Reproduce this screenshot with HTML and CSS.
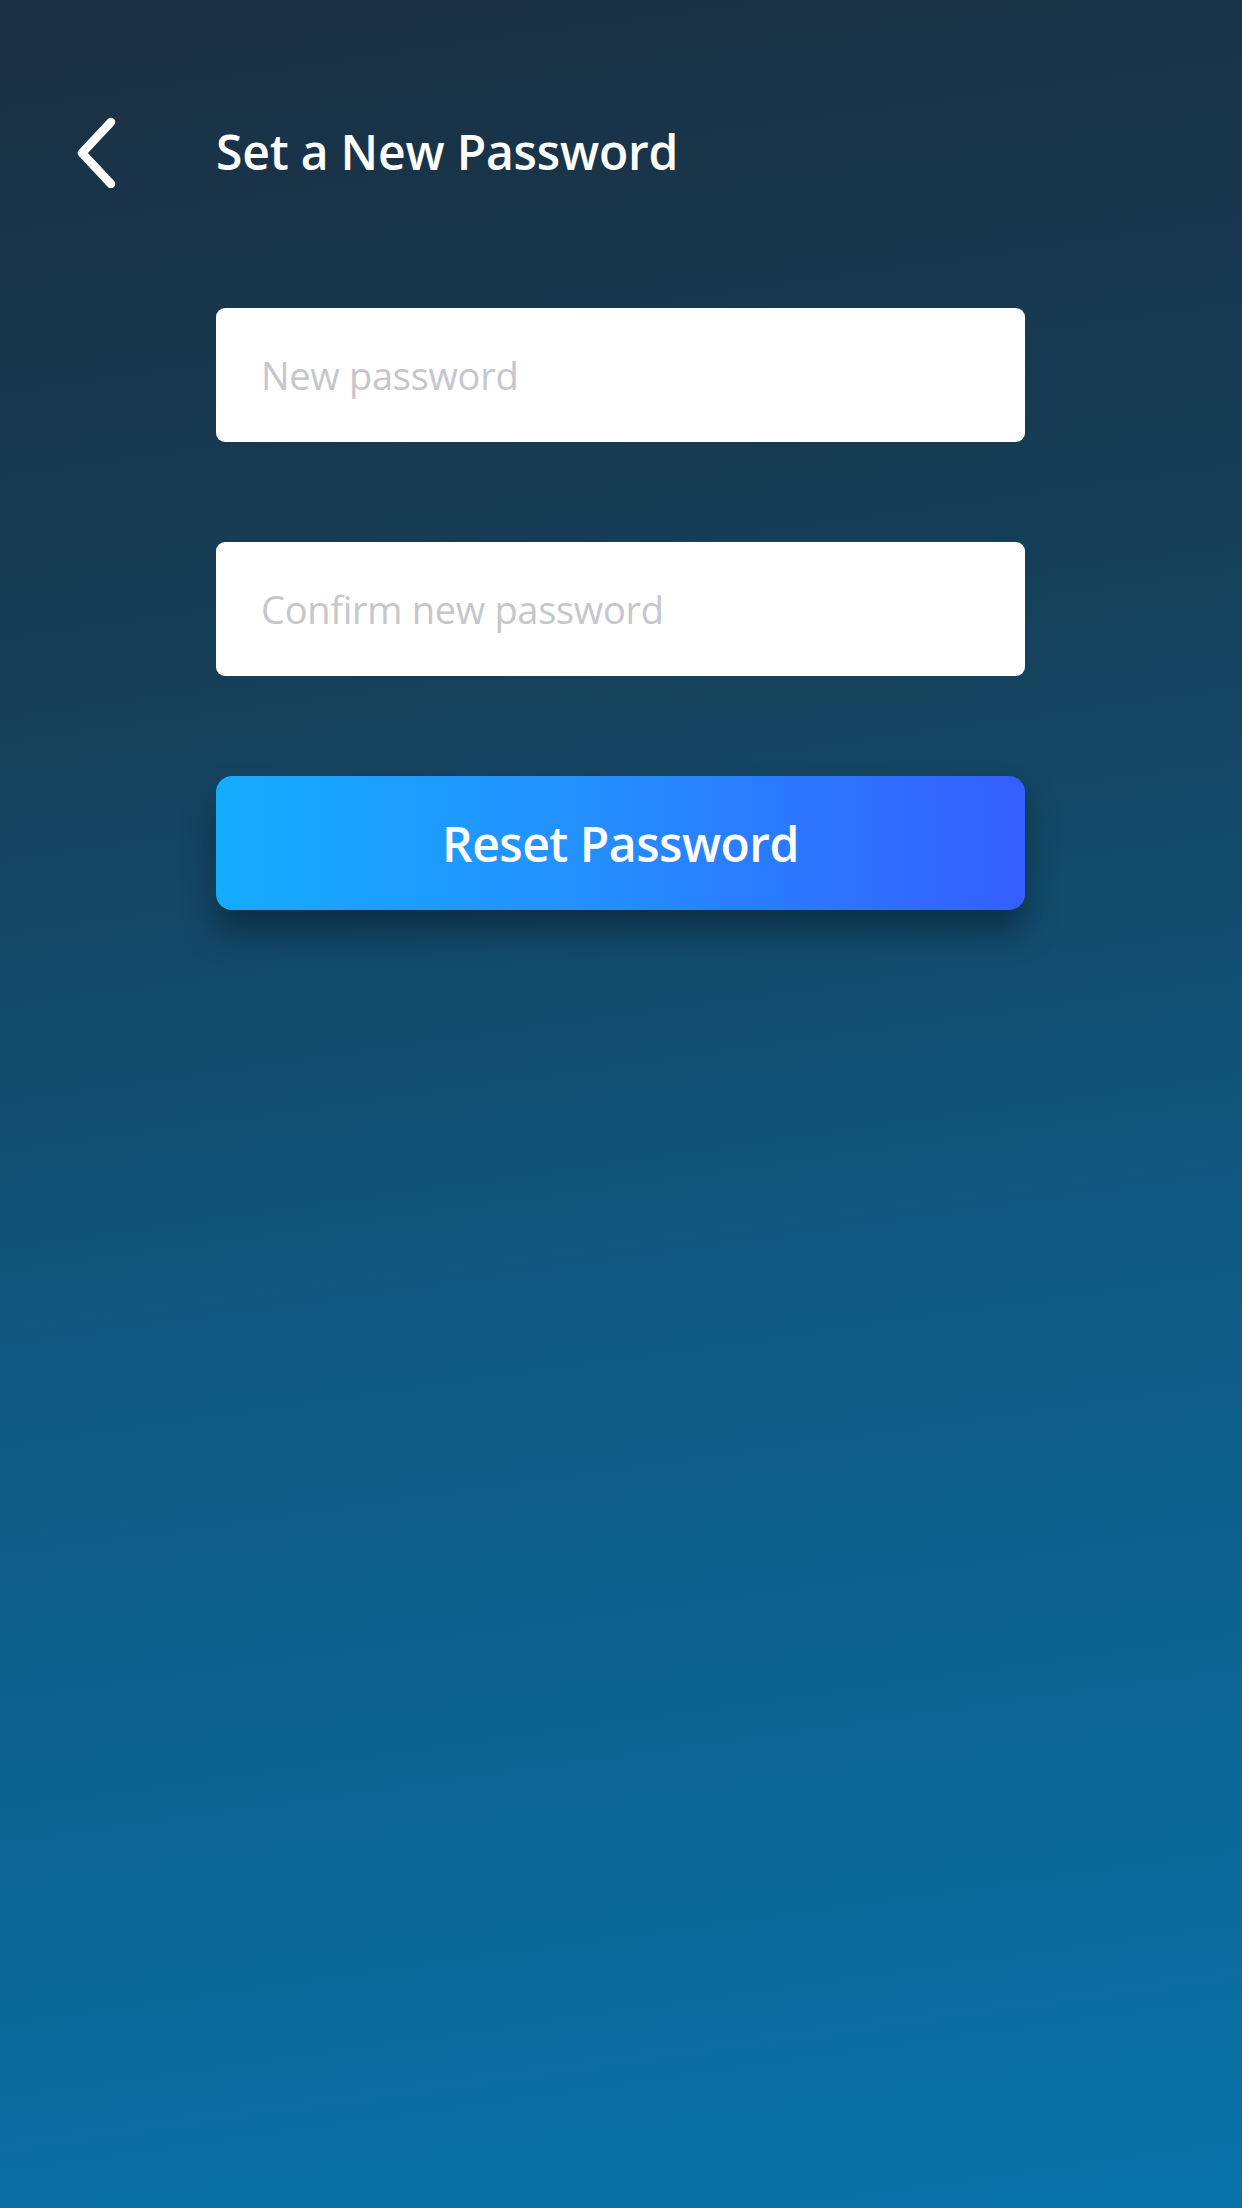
FILE: index.html
```html
<!DOCTYPE html>
<html>
<head>
<meta charset="utf-8">
<link rel="stylesheet" href="styles.css">
</head>
<body>
<div class="screen">
  <header class="topbar">
    <button class="back" aria-label="Back">
      <svg width="48" height="72" viewBox="0 0 48 72">
        <path d="M41 6 L12 37 L41 68" fill="none" stroke="#ffffff" stroke-width="8.5" stroke-linecap="round" stroke-linejoin="round"/>
      </svg>
    </button>
    <h1 class="title">Set a New Password</h1>
  </header>
  <form class="form">
    <div class="field"><span class="placeholder">New password</span></div>
    <div class="field"><span class="placeholder">Confirm new password</span></div>
    <div class="btn">Reset Password</div>
  </form>
</div>
</body>
</html>
```

FILE: styles.css
```css
html, body {
  margin: 0;
  padding: 0;
}
body {
  width: 1242px;
  height: 2208px;
  overflow: hidden;
  font-family: "Open Sans", "Noto Sans", sans-serif;
}
.screen {
  width: 1242px;
  height: 2208px;
  background: linear-gradient(172deg, #1a2f42 0%, #153f58 30%, #0f5a83 60%, #0872a8 100%);
  box-sizing: border-box;
  padding-top: 116px;
}
.topbar {
  display: flex;
  align-items: center;
  height: 72px;
}
.back {
  margin-left: 70px;
  width: 48px;
  height: 72px;
  padding: 0;
  border: 0;
  background: none;
  display: flex;
}
.title {
  margin: 0 0 0 98px;
  color: #ffffff;
  font-size: 48px;
  font-weight: 600;
  letter-spacing: -0.2px;
  line-height: 72px;
}
.form {
  margin: 120px 0 0 216px;
  width: 809px;
  display: flex;
  flex-direction: column;
  gap: 100px;
}
.field {
  height: 134px;
  background: #ffffff;
  border-radius: 9px;
  display: flex;
  align-items: center;
  padding-left: 45px;
}
.placeholder {
  color: #c6c6cb;
  font-size: 38px;
  letter-spacing: -0.3px;
}
.btn {
  height: 134px;
  border-radius: 16px;
  background: linear-gradient(90deg, #14acff 0%, #2390ff 45%, #355eff 100%);
  box-shadow: 0 22px 30px rgba(8, 30, 48, 0.55);
  display: flex;
  align-items: center;
  justify-content: center;
  color: #ffffff;
  font-size: 48px;
  font-weight: 600;
  letter-spacing: -0.5px;
}
```
